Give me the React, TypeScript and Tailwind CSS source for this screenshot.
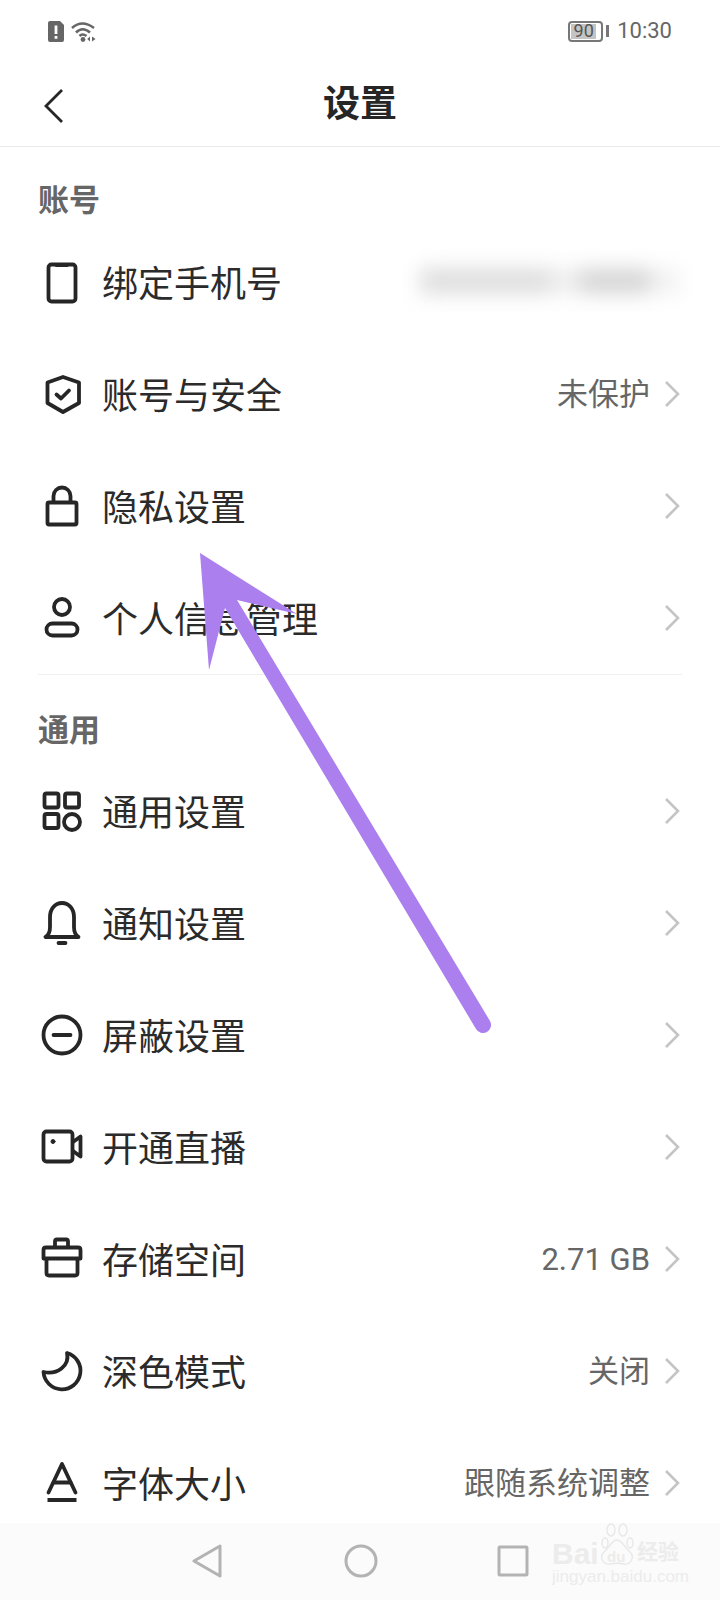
import type { ReactNode } from "react";

const cjk = "font-['Noto_Sans_CJK_SC','Noto_Sans',sans-serif]";

function Icon({ children }: { children: ReactNode }) {
  return (
    <svg
      viewBox="0 0 48 48"
      className="w-12 h-12 shrink-0"
      fill="none"
      stroke="#262626"
      strokeWidth={3.8}
      strokeLinecap="round"
      strokeLinejoin="round"
    >
      {children}
    </svg>
  );
}

const icons = {
  phone: (
    <Icon>
      <rect x="10.5" y="6.5" width="27" height="37" rx="3" />
      <path d="M18 7h12v1.5H18z" fill="#262626" strokeWidth={1} />
    </Icon>
  ),
  shield: (
    <Icon>
      <path d="M25 7 41 12.5V33L25 42 9.5 33V12.5Z" />
      <path d="M18.5 24.5 23 28.5 31 20.5" />
    </Icon>
  ),
  lock: (
    <Icon>
      <rect x="9.5" y="20.5" width="29" height="22" rx="1.5" />
      <path d="M15.5 20V14a8.500 8.500 0 0 1 17 0v6" />
    </Icon>
  ),
  person: (
    <Icon>
      <circle cx="24" cy="13" r="8" />
      <rect x="8.500" y="29.500" width="31" height="12" rx="6" />
    </Icon>
  ),
  grid: (
    <Icon>
      <rect x="6.500" y="6.500" width="14" height="14" rx="2" />
      <rect x="27" y="6.500" width="14" height="14" rx="2" />
      <rect x="6.500" y="27" width="14" height="14" rx="2" />
      <circle cx="34" cy="35" r="8" />
    </Icon>
  ),
  bell: (
    <Icon>
      <path d="M7.500 38H40.500C37 36 36 33 36 28V18C36 10 31 4 24 4S12 10 12 18V28C12 33 11 36 7.500 38Z" />
      <path d="M20.500 44H27.500" />
    </Icon>
  ),
  block: (
    <Icon>
      <circle cx="24" cy="24" r="18.500" />
      <path d="M15.500 24H32.500" />
    </Icon>
  ),
  video: (
    <Icon>
      <rect x="5.500" y="8.500" width="29" height="30" rx="3" />
      <path d="M35 19 42.500 13.500V33.500L35 28" />
      <circle cx="15" cy="18.500" r="2" fill="#262626" strokeWidth={1} />
    </Icon>
  ),
  storage: (
    <Icon>
      <path d="M17 12V6.500Q17 4.500 19 4.500H28Q30 4.500 30 6.500V12" />
      <path d="M5.500 23.500V15Q5.500 12.500 8 12.500H40Q42.500 12.500 42.500 15V23.500Z" />
      <path d="M8.500 24V38Q8.500 40.500 11 40.500H37Q39.500 40.500 39.500 38V24" />
    </Icon>
  ),
  moon: (
    <Icon>
      <path d="M29 6A18.500 18.500 0 1 1 5.500 25C19 28 32 19 29 6Z" />
    </Icon>
  ),
  font: (
    <Icon>
      <path d="M10.500 33.500 24 5 37.500 33.500" />
      <path d="M15.500 23.500H32.500" />
      <path d="M9.500 41H38.500" strokeWidth={4} strokeLinecap="butt" />
    </Icon>
  ),
};

function Chevron() {
  return (
    <svg viewBox="0 0 16 28" className="w-4 h-7 ml-[14px] shrink-0" fill="none" stroke="#c4c4c4" strokeWidth={2.6}>
      <path d="M2 2 14 14 2 26" />
    </svg>
  );
}

function Row({ icon, label, value, hideArrow, children }: { icon: ReactNode; label: string; value?: string; hideArrow?: boolean; children?: ReactNode }) {
  return (
    <div className="h-[112px] shrink-0 flex items-center pl-[38px] pr-10">
      {icon}
      <span className="ml-4 mb-[2px] text-[36px] leading-none text-[#2b2b2b]">{label}</span>
      <div className="flex-1" />
      {children}
      {value && <span className="font-['Roboto','Noto_Sans_CJK_SC',sans-serif] text-[31px] leading-none text-[#666666]">{value}</span>}
      {!hideArrow && <Chevron />}
    </div>
  );
}

function SectionTitle({ children, className }: { children: string; className: string }) {
  return <div className={`px-[38px] text-[31px] leading-none font-bold text-[#666666] ${className}`}>{children}</div>;
}

export default function App() {
  return (
    <div className={`relative w-[720px] h-[1600px] bg-white overflow-hidden flex flex-col ${cjk}`}>
      {/* STATUS BAR */}
      <div className="h-[62px] shrink-0 flex items-center justify-between pl-12 pr-[48px]">
        <div className="flex items-center gap-[7px]">
          <svg viewBox="0 0 16 21" className="w-4 h-[21px]">
            <path d="M2 0H12L16 4V19Q16 21 14 21H2Q0 21 0 19V2Q0 0 2 0Z" fill="#666" />
            <rect x="6.600" y="4.500" width="2.800" height="8.500" fill="#fff" />
            <rect x="6.600" y="15" width="2.800" height="2.800" fill="#fff" />
          </svg>
          <svg viewBox="0 0 25 21" className="w-[25px] h-[21px]" fill="none" stroke="#666" strokeWidth={2.600}>
            <path d="M1 7Q11 -2 23 7" />
            <path d="M5 11.500Q11.500 5 19 11.500" />
            <path d="M8.500 15Q11.500 12 15.500 15" />
            <circle cx="12" cy="18.500" r="2.400" fill="#666" stroke="none" />
            <path d="M19 15.500V20.500L16.200 18ZM21 15.500V20.500L24.500 18Z" fill="#666" stroke="none" />
          </svg>
        </div>
        <div className="flex items-center">
          <div className="w-[35px] h-[21px] border-2 border-[#777] rounded-[4px] p-[1px] flex">
            <div className="w-[25px] bg-[#c4c4c4] flex items-center justify-center font-['Roboto'] text-[18px] leading-none text-[#555]">90</div>
          </div>
          <div className="w-[3px] h-[12px] ml-[3px] bg-[#777]" />
          <span className="ml-[8px] font-['Roboto'] text-[22px] leading-none text-[#666]">10:30</span>
        </div>
      </div>

      {/* TITLE BAR */}
      <div className="relative h-[85px] shrink-0 flex items-center justify-center border-b border-[#ececec]">
        <svg viewBox="0 0 20 36" className="absolute left-[44px] top-[26px] w-5 h-9" fill="none" stroke="#262626" strokeWidth={2.800}>
          <path d="M18 2 2 18 18 34" />
        </svg>
        <span className="text-[37px] leading-none font-bold text-[#262626] mb-[5px]">设置</span>
      </div>

      {/* LIST */}
      <div className="flex-1 min-h-0 overflow-hidden flex flex-col">
        <SectionTitle className="pt-[35px] pb-[13px] shrink-0">账号</SectionTitle>
        <Row icon={icons.phone} label="绑定手机号" hideArrow>
          <div className="flex w-[260px] h-[26px] -mt-[2px] blur-[10px]">
            <div className="w-[130px] bg-[#dedede]" />
            <div className="w-[30px] bg-[#eeeeee]" />
            <div className="w-[70px] bg-[#d6d6d6]" />
            <div className="w-[30px] bg-[#f2f2f2]" />
          </div>
        </Row>
        <Row icon={icons.shield} label="账号与安全" value="未保护" />
        <Row icon={icons.lock} label="隐私设置" />
        <Row icon={icons.person} label="个人信息管理" />
        <div className="mx-[38px] h-[1px] bg-[#f0f0f0] shrink-0" />
        <SectionTitle className="pt-[37px] pb-[12px] shrink-0">通用</SectionTitle>
        <Row icon={icons.grid} label="通用设置" />
        <Row icon={icons.bell} label="通知设置" />
        <Row icon={icons.block} label="屏蔽设置" />
        <Row icon={icons.video} label="开通直播" />
        <Row icon={icons.storage} label="存储空间" value="2.71 GB" />
        <Row icon={icons.moon} label="深色模式" value="关闭" />
        <Row icon={icons.font} label="字体大小" value="跟随系统调整" />
      </div>

      {/* NAV BAR */}
      <div className="h-[77px] shrink-0 bg-[#fbfbfb] flex items-center pl-[192px] pb-[1px]">
        <svg viewBox="0 0 30 34" className="w-[30px] h-[34px]" fill="none" stroke="#b3b3b3" strokeWidth={3} strokeLinejoin="round">
          <path d="M28 2V32L2 17Z" />
        </svg>
        <svg viewBox="0 0 34 34" className="ml-[122px] w-[34px] h-[34px]" fill="none" stroke="#b3b3b3" strokeWidth={3}>
          <circle cx="17" cy="17" r="15" />
        </svg>
        <svg viewBox="0 0 32 32" className="ml-[119px] w-8 h-8" fill="none" stroke="#b3b3b3" strokeWidth={3} strokeLinejoin="round">
          <rect x="2" y="2" width="28" height="28" rx="1" />
        </svg>
      </div>

      {/* WATERMARK */}
      <div className="absolute left-[552px] top-[1520px] w-[130px] h-[66px] text-[#ececec] font-['Liberation_Sans',sans-serif]">
        <div className="absolute left-0 top-[20px] text-[30px] leading-[27px] font-bold">Bai</div>
        <svg viewBox="0 0 38 44" className="absolute left-[46px] top-[3px] w-[38px] h-11" fill="none" stroke="#e8e8e8" strokeWidth={1.400}>
          <ellipse cx="7" cy="20" rx="3" ry="5" />
          <ellipse cx="13" cy="7" rx="4" ry="6" />
          <ellipse cx="25" cy="7" rx="4" ry="6" />
          <ellipse cx="32" cy="20" rx="3" ry="5" />
          <path d="M19 17C14 17 12 24 6 29 1 34 5 42 12 41 17 40 21 40 26 41 33 42 37 34 32 29 26 24 24 17 19 17Z" />
        </svg>
        <div className="absolute left-[55px] top-[29px] text-[15px] leading-none font-bold">du</div>
        <div className={`absolute left-[85px] top-[20px] text-[21px] leading-none font-bold ${cjk}`}>经验</div>
        <div className="absolute left-0 top-[48px] text-[17px] leading-none">jingyan.baidu.com</div>
      </div>

      {/* ANNOTATION ARROW */}
      <svg viewBox="0 0 720 1600" className="absolute inset-0 w-[720px] h-[1600px] pointer-events-none">
        <path d="M200 553 297 614 237 600 490 1021A8 8 0 0 1 476 1029L225 608 209 670Z" fill="#ab7fee" />
      </svg>
    </div>
  );
}
